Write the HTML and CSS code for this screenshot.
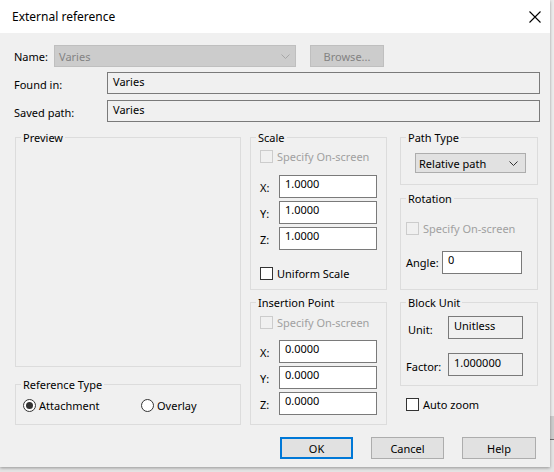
FILE: index.html
```html
<!DOCTYPE html>
<html lang="en">
<head>
    <meta charset="UTF-8">
    <title>External reference</title>
    <link rel="stylesheet" href="styles.css">
</head>
<body>
    <div class="dialog">
        <div class="titlebar">
            <span class="title">External reference</span>
            <svg class="close" width="12" height="12" viewBox="0 0 12 12">
                <path d="M0.5 0.5 L11.5 11.5 M11.5 0.5 L0.5 11.5" stroke="#000" stroke-width="1.1" fill="none"/>
            </svg>
        </div>

        <div class="content">
            <div class="row row-name">
                <span class="lbl lbl-name">Name:</span>
                <div class="combo combo-disabled">
                    <span>Varies</span>
                    <svg width="9" height="5" viewBox="0 0 9 5"><path d="M0.5 0.5 L4.5 4.5 L8.5 0.5" stroke="#a6a6a6" fill="none"/></svg>
                </div>
                <div class="btn btn-disabled browse">Browse...</div>
            </div>
            <div class="row row-found">
                <span class="lbl lbl-wide">Found in:</span>
                <div class="field readonly wide">Varies</div>
            </div>
            <div class="row row-saved">
                <span class="lbl lbl-wide">Saved path:</span>
                <div class="field readonly wide">Varies</div>
            </div>

            <div class="main">
                <div class="col col-left">
                    <div class="group preview">
                        <span class="group-title">Preview</span>
                    </div>
                    <div class="group reftype">
                        <span class="group-title">Reference Type</span>
                        <div class="radios">
                            <div class="radio-item first"><span class="radio checked"></span>Attachment</div>
                            <div class="radio-item"><span class="radio"></span>Overlay</div>
                        </div>
                    </div>
                </div>

                <div class="col col-mid">
                    <div class="group scale">
                        <span class="group-title">Scale</span>
                        <div class="check disabled"><span class="box"></span>Specify On-screen</div>
                        <div class="xyz">
                            <div class="xyz-row"><span class="axis">X:</span><div class="field input">1.0000</div></div>
                            <div class="xyz-row"><span class="axis">Y:</span><div class="field input">1.0000</div></div>
                            <div class="xyz-row"><span class="axis">Z:</span><div class="field input">1.0000</div></div>
                        </div>
                        <div class="check uniform"><span class="box"></span>Uniform Scale</div>
                    </div>
                    <div class="group insertion">
                        <span class="group-title">Insertion Point</span>
                        <div class="check disabled"><span class="box"></span>Specify On-screen</div>
                        <div class="xyz">
                            <div class="xyz-row"><span class="axis">X:</span><div class="field input">0.0000</div></div>
                            <div class="xyz-row"><span class="axis">Y:</span><div class="field input">0.0000</div></div>
                            <div class="xyz-row"><span class="axis">Z:</span><div class="field input">0.0000</div></div>
                        </div>
                    </div>
                </div>

                <div class="col col-right">
                    <div class="group pathtype">
                        <span class="group-title">Path Type</span>
                        <div class="combo select">
                            <span>Relative path</span>
                            <svg width="9" height="5" viewBox="0 0 9 5"><path d="M0.5 0.5 L4.5 4.5 L8.5 0.5" stroke="#333" fill="none"/></svg>
                        </div>
                    </div>
                    <div class="group rotation">
                        <span class="group-title">Rotation</span>
                        <div class="check disabled"><span class="box"></span>Specify On-screen</div>
                        <div class="angle-row"><span class="lbl-angle">Angle:</span><div class="field input angle">0</div></div>
                    </div>
                    <div class="group blockunit">
                        <span class="group-title">Block Unit</span>
                        <div class="unit-row unit"><span class="lbl-unit">Unit:</span><div class="field readonly small">Unitless</div></div>
                        <div class="unit-row factor"><span class="lbl-factor">Factor:</span><div class="field readonly small">1.000000</div></div>
                    </div>
                    <div class="check autozoom"><span class="box"></span>Auto zoom</div>
                </div>
            </div>

            <div class="buttons">
                <div class="btn default">OK</div>
                <div class="btn">Cancel</div>
                <div class="btn help">Help</div>
            </div>
        </div>
    </div>
</body>
</html>
```

FILE: styles.css
```css
* {
    margin: 0;
    padding: 0;
    box-sizing: border-box;
}

body {
    width: 554px;
    height: 472px;
    overflow: hidden;
    background: linear-gradient(to bottom, #ececec 0, #ececec 416px, #cdcdcd 416px, #cdcdcd 439px, #6e6e6e 439px, #6e6e6e 440px, #e4e4e4 440px);
    font-family: "Noto Sans", "Open Sans", sans-serif;
    font-size: 11px;
    color: #000;
}

.dialog {
    width: 550px;
    height: 467px;
    background: #f0f0f0;
    box-shadow: 0 1px 3px rgba(0, 0, 0, 0.35);
}

.titlebar {
    height: 33px;
    background: #fff;
    display: flex;
    align-items: center;
    justify-content: space-between;
    padding: 0 9px 0 12px;
}

.title {
    font-size: 12px;
}

.content {
    padding: 0 10px 0 14px;
}

.row {
    display: flex;
    align-items: center;
    height: 22px;
}

.row-name { margin-top: 12px; }
.row-found { margin-top: 5px; }
.row-saved { margin-top: 6px; }

.lbl-name { width: 40px; }
.lbl-wide { width: 93px; padding-top: 2px; }

.combo {
    display: flex;
    align-items: center;
    justify-content: space-between;
    height: 22px;
}

.combo-disabled {
    width: 242px;
    background: #cccccc;
    border: 1px solid #bfbfbf;
    color: #838383;
    padding: 0 5px 0 4px;
}

.btn {
    display: flex;
    align-items: center;
    justify-content: center;
    width: 73px;
    height: 22px;
    background: #e1e1e1;
    border: 1px solid #adadad;
}

.btn-disabled {
    background: #cccccc;
    border-color: #bfbfbf;
    color: #838383;
}

.browse {
    margin-left: 14px;
    width: 74px;
}

.field {
    height: 23px;
    border: 1px solid #7a7a7a;
    padding: 1px 0 0 5px;
    line-height: 16px;
}

.readonly {
    background: #f0f0f0;
}

.wide {
    width: 433px;
    height: 22px;
}

.input {
    background: #fff;
    padding-top: 0;
}

/* group boxes */
.main {
    display: flex;
    margin: 15px 0 0 1px;
}

.col {
    display: flex;
    flex-direction: column;
}

.col-left { width: 226px; }
.col-mid { width: 137px; margin-left: 9px; }
.col-right { width: 138px; margin-left: 13px; }

.group {
    border: 1px solid #dcdcdc;
}

.group-title {
    display: block;
    width: fit-content;
    margin: -8px 0 0 5px;
    padding: 0 2px;
    line-height: 15px;
    background: #f0f0f0;
}

.preview { height: 230px; }
.reftype { height: 41px; margin-top: 17px; }
.scale { height: 153px; }
.insertion { height: 123px; margin-top: 12px; }
.pathtype { height: 48px; }
.rotation { height: 92px; margin-top: 13px; }
.blockunit { height: 84px; margin-top: 12px; }

/* checkboxes and radios */
.check {
    display: flex;
    align-items: center;
    height: 15px;
}

.check .box {
    width: 13px;
    height: 13px;
    border: 1px solid #333;
    background: #fff;
    margin-right: 4px;
}

.check.disabled {
    color: #a0a0a0;
}

.check.disabled .box {
    border-color: #cccccc;
    background: #f0f0f0;
}

.scale .check.disabled { margin: 4px 0 0 9px; }
.insertion .check.disabled { margin: 5px 0 0 9px; }
.rotation .check.disabled { margin: 15px 0 0 5px; }
.uniform { margin: 16px 0 0 9px; }
.autozoom { margin: 11px 0 0 6px; }

.radios {
    display: flex;
    margin: 6px 0 0 7px;
}

.radio-item {
    display: flex;
    align-items: center;
    height: 15px;
}

.radio-item.first { width: 118px; }

.radio {
    display: flex;
    align-items: center;
    justify-content: center;
    width: 13px;
    height: 13px;
    border: 1px solid #333;
    border-radius: 50%;
    background: #fff;
    margin-right: 3px;
}

.radio.checked::after {
    content: '';
    width: 7px;
    height: 7px;
    border-radius: 50%;
    background: #333;
}

/* coordinate rows */
.xyz {
    display: flex;
    flex-direction: column;
    gap: 3px;
}

.scale .xyz { margin-top: 11px; }
.insertion .xyz { margin-top: 10px; }

.xyz-row {
    display: flex;
    align-items: center;
    padding-left: 9px;
}

.axis {
    width: 19px;
    padding-top: 1px;
}

.xyz-row .input {
    width: 98px;
}

.pathtype .select {
    width: 111px;
    height: 20px;
    margin: 8px 0 0 14px;
    background: #e1e1e1;
    border: 1px solid #adadad;
    padding: 0 7px 0 3px;
}

.angle-row {
    display: flex;
    align-items: center;
    margin: 15px 0 0 5px;
}

.lbl-angle {
    width: 36px;
}

.angle {
    width: 80px;
}

.unit-row {
    display: flex;
    align-items: center;
}

.unit { margin: 6px 0 0 7px; }
.factor { margin: 14px 0 0 5px; }

.lbl-unit { width: 40px; padding-top: 3px; }
.lbl-factor { width: 42px; padding-top: 3px; }

.small {
    width: 75px;
}

.buttons {
    display: flex;
    justify-content: flex-end;
    gap: 18px;
    margin: 12px 4px 0 0;
}

.default {
    border: 2px solid #0078d7;
}

.help {
    width: 74px;
}
```
